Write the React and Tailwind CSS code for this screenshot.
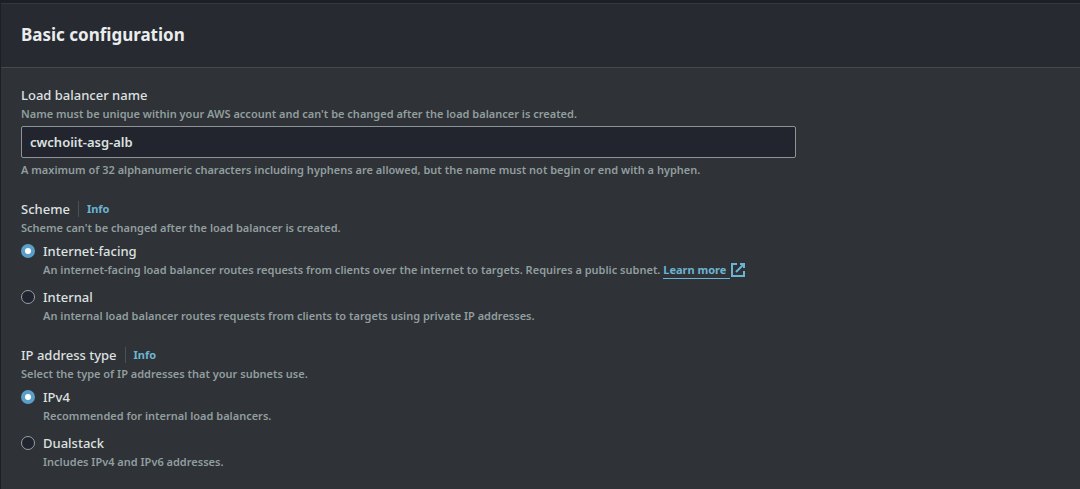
const DESCRIPTION = "text-[11px] leading-4 font-semibold text-[#919e9f]";
const LABEL = "text-[13px] leading-[22px] font-medium text-[#dde1e1]";

function InfoLink({ topic }) {
  return (
    <a
      href="#info"
      aria-label={`Info about ${topic}`}
      className="ml-2 border-l border-[#4b5157] pl-2 text-[11px] leading-4 font-bold text-[#6bb5d2]"
    >
      Info
    </a>
  );
}

function ExternalIcon() {
  return (
    <svg viewBox="0 0 16 16" className="h-4 w-4" fill="none" stroke="currentColor" strokeWidth="2" aria-hidden="true">
      <path d="M7 2H2v12h12V9" />
      <path d="M10 2h4v4" />
      <path d="M6 10l7.5-7.5" />
    </svg>
  );
}

function RadioOption({ name, value, label, defaultChecked, children }) {
  const id = `${name}-${value}`;
  return (
    <div className="flex gap-2">
      <div className="flex h-[22px] items-center">
        <input
          type="radio"
          id={id}
          name={name}
          value={value}
          defaultChecked={defaultChecked}
          aria-describedby={`${id}-description`}
          className="m-0 h-3.5 w-3.5 appearance-none rounded-full border border-[#95a0a6] bg-[#20242e] checked:border-4 checked:border-[#5a9fc8] checked:bg-white"
        />
      </div>
      <div className="min-w-0">
        <label htmlFor={id} className={`block ${LABEL}`}>
          {label}
        </label>
        <p id={`${id}-description`} className={DESCRIPTION}>
          {children}
        </p>
      </div>
    </div>
  );
}

function RadioField({ label, description, children }) {
  return (
    <fieldset className="min-w-0">
      <legend className="flex items-center p-0">
        <span className={LABEL}>{label}</span>
        <InfoLink topic={label} />
      </legend>
      <p className={DESCRIPTION}>{description}</p>
      <div className="mt-1 flex flex-col gap-2">{children}</div>
    </fieldset>
  );
}

export default function App() {
  return (
    <main className="min-h-screen bg-[#1c1f25] pt-[3px] pl-px font-['Noto_Sans',sans-serif]">
      <section className="flex min-h-[calc(100vh-3px)] flex-col border-t border-[#33373c] bg-[#2f3236]">
        <header className="border-b border-[#47494f] bg-[#282a32] px-5 pt-[19px] pb-5">
          <h2 className="text-[17px] leading-6 font-bold text-[#eaeded]">Basic configuration</h2>
        </header>
        <form className="flex flex-col gap-5 px-5 pt-4 pb-5" onSubmit={(e) => e.preventDefault()}>
          <div>
            <label htmlFor="lb-name" className={`block ${LABEL}`}>
              Load balancer name
            </label>
            <p id="lb-name-description" className={DESCRIPTION}>
              Name must be unique within your AWS account and can't be changed after the load balancer is created.
            </p>
            <input
              id="lb-name"
              type="text"
              defaultValue="cwchoiit-asg-alb"
              aria-describedby="lb-name-description lb-name-constraint"
              className="my-1 block h-8 w-full max-w-[775px] rounded-xs border border-[#8d9499] bg-[#22252e] px-2 text-[13px] font-semibold text-[#dde1e1] outline-none"
            />
            <p id="lb-name-constraint" className={DESCRIPTION}>
              A maximum of 32 alphanumeric characters including hyphens are allowed, but the name must not begin or end with a hyphen.
            </p>
          </div>

          <RadioField label="Scheme" description="Scheme can't be changed after the load balancer is created.">
            <RadioOption name="scheme" value="internet-facing" label="Internet-facing" defaultChecked>
              An internet-facing load balancer routes requests from clients over the internet to targets. Requires a public subnet.{" "}
              <a href="#learn-more" className="inline-flex h-4 text-[#6bb5d2]">
                <span className="h-[17px] border-b border-[#6bb5d2] pr-1 font-bold">Learn more</span>
                <ExternalIcon />
              </a>
            </RadioOption>
            <RadioOption name="scheme" value="internal" label="Internal">
              An internal load balancer routes requests from clients to targets using private IP addresses.
            </RadioOption>
          </RadioField>

          <RadioField label="IP address type" description="Select the type of IP addresses that your subnets use.">
            <RadioOption name="ip-type" value="ipv4" label="IPv4" defaultChecked>
              Recommended for internal load balancers.
            </RadioOption>
            <RadioOption name="ip-type" value="dualstack" label="Dualstack">
              Includes IPv4 and IPv6 addresses.
            </RadioOption>
          </RadioField>
        </form>
      </section>
    </main>
  );
}
